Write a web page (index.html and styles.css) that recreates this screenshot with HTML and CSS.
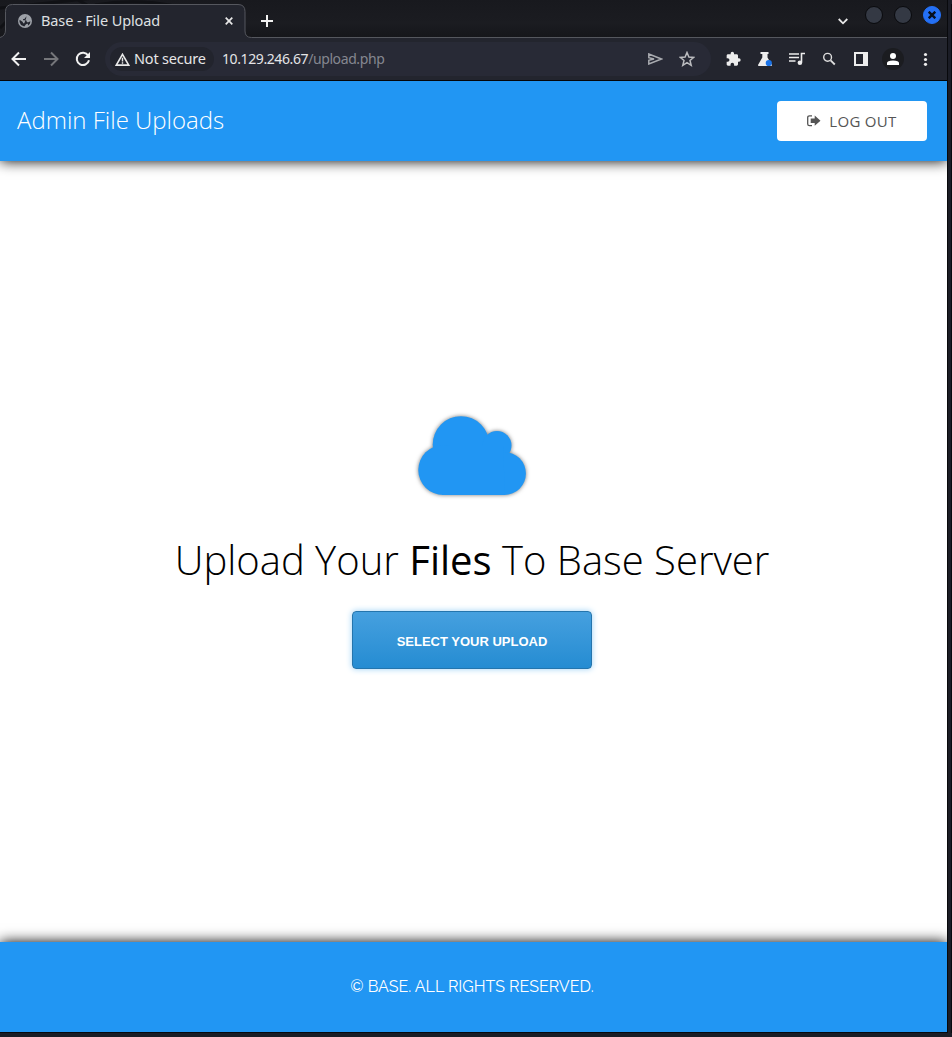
FILE: index.html
```html
<!DOCTYPE html>
<html lang="en">
<head>
<meta charset="utf-8">
<title>Base - File Upload</title>
<link rel="stylesheet" href="styles.css">
</head>
<body>
<div class="window">
  <div class="tabstrip">
    <svg class="tab-shape" width="947" height="38" viewBox="0 0 947 38"><g fill="none" stroke="#101115" stroke-width="3"><path d="M0 8L48 3L94 -2M78 0L94 9M0 28L8 20M95 5Q135 -2 175 6"/></g><path d="M0 38V37.5Q5.500 36 5.500 30V11.500Q5.500 4.500 12.500 4.500H238Q245 4.500 245 11.500V31Q245 37.500 251.500 37.500H947V38Z" fill="#23252e"/><path d="M0 37.500Q5.500 36 5.500 30V11.500Q5.500 4.500 12.500 4.500H238Q245 4.500 245 11.500V31Q245 37.500 251.500 37.500H947" fill="none" stroke="#55575e"/></svg>
    <div class="tab">
      <svg class="globe" width="14" height="14" viewBox="0 0 14 14"><circle cx="7" cy="7" r="7" fill="#9da1a8"/><path d="M9 1.800L8.800 3.300L7.200 3.500L6.800 4.800L5 5.300V6.300H8.200L9 8.300H10.500L12.400 7.200L12 9.500L10.800 11L9.300 12.200L6.300 12.600L7.800 10.500L6.300 9.300L5 9.300L4.800 8L1.600 5.800L1.500 8L3 11L6.300 12.600L9.300 12.200L10.300 11.200L9.500 9.600L7.800 10.500L6.300 9.300Z" fill="#23252e"/></svg>
      <span class="tab-title">Base - File Upload</span>
      <svg class="close" width="8" height="8" viewBox="0 0 8 8"><path d="M.7.7L7.300 7.300M7.300.7L.7 7.300" stroke="#e8e8e8" stroke-width="1.700"/></svg>
    </div>
    <svg class="plus" width="12" height="12" viewBox="0 0 12 12"><path d="M6 0V12M0 6H12" stroke="#f1f1f1" stroke-width="2"/></svg>
    <div class="controls">
      <svg class="chevron" width="10" height="7" viewBox="0 0 10 7"><path d="M.7 1L5 5.300L9.300 1" fill="none" stroke="#e8e8e8" stroke-width="1.800"/></svg>
      <i class="dot"></i><i class="dot"></i>
      <i class="dot quit"><svg width="8" height="8" viewBox="0 0 8 8"><path d="M.7.7L7.300 7.300M7.300.7L.7 7.300" stroke="#07101f" stroke-width="2.400"/></svg></i>
    </div>
  </div>
  <div class="toolbar">
    <div class="nav">
      <svg width="16" height="16" viewBox="0 0 16 16"><path d="M15 8H2M8 1.500L1.500 8L8 14.500" fill="none" stroke="#f1f1f1" stroke-width="2"/></svg>
      <svg width="16" height="16" viewBox="0 0 16 16"><path d="M1 8H14M8 1.500L14.500 8L8 14.500" fill="none" stroke="#75767a" stroke-width="2"/></svg>
      <svg width="16" height="16" viewBox="0 0 16 16"><path d="M13.200 4.500A6.200 6.200 0 1 0 14 9.300" fill="none" stroke="#f1f1f1" stroke-width="2"/><path d="M15 1V7H9Z" fill="#f1f1f1"/></svg>
    </div>
    <div class="omnibox">
      <div class="security">
        <svg width="15" height="13" viewBox="0 0 15 13"><path d="M7.500 1.300L13.700 12.100H1.300Z" fill="none" stroke="#e9e9e9" stroke-width="1.600"/><path d="M7.500 4.800V8.600M7.500 9.300V10.800" stroke="#e9e9e9" stroke-width="1.400"/></svg>
        <span class="secure-text">Not secure</span>
      </div>
      <span class="url"><span class="host">10.129.246.67</span><span class="path">/upload.php</span></span>
      <svg class="send" width="15" height="12" viewBox="0 0 15 12"><path d="M.8 1L13.500 6L.8 11V7.300L6 6L.8 4.700Z" fill="none" stroke="#a9abb0" stroke-width="1.500"/></svg>
      <svg class="star" width="16" height="16" viewBox="0 0 16 16"><path d="M8 1.500L9.900 6L14.700 6.400L11 9.500L12.200 14.300L8 11.700L3.800 14.300L5 9.500L1.300 6.400L6.100 6Z" fill="none" stroke="#bbbcbf" stroke-width="1.500"/></svg>
    </div>
    <div class="actions">
      <svg width="16" height="16" viewBox="0 0 24 24"><path d="M21 11h-1.500V7c0-1.100-.9-2-2-2h-4V3.500a2.500 2.500 0 0 0-5 0V5h-4c-1.100 0-2 .9-2 2v3.800H4a2.700 2.700 0 0 1 0 5.400H2.500V20c0 1.100.9 2 2 2h3.800v-1.500a2.700 2.700 0 0 1 5.400 0V22h3.800c1.100 0 2-.9 2-2v-4H21a2.500 2.500 0 0 0 0-5z" fill="#ededed"/></svg>
      <svg width="16" height="16" viewBox="0 0 16 16"><path d="M3.500 1H11.500V3H10.500V6.500L15 14Q15 15 14 15H2Q.7 15 1 14L5.300 6.500V3H3.500Z" fill="#ededed"/><circle cx="11.800" cy="12" r="3.100" fill="#1a73e8"/></svg>
      <svg width="16" height="16" viewBox="0 0 16 16"><path d="M0 3H10M0 6.500H10M0 10H6.500" stroke="#ededed" stroke-width="1.500"/><path d="M12.500 11.500V2.500H16" fill="none" stroke="#ededed" stroke-width="1.600"/><circle cx="10.900" cy="11.700" r="2.300" fill="#ededed"/></svg>
      <svg width="16" height="16" viewBox="0 0 16 16"><circle cx="6.600" cy="6.300" r="3.900" fill="none" stroke="#dedede" stroke-width="1.400"/><path d="M9.600 9.300L13.800 13.500" stroke="#dedede" stroke-width="1.800"/></svg>
      <svg width="16" height="16" viewBox="0 0 16 16"><path fill-rule="evenodd" d="M1 1H15V15H1ZM3 3V13H10V3Z" fill="#ededed"/></svg>
      <span class="avatar"><svg width="12" height="12" viewBox="0 0 12 12"><circle cx="6" cy="3" r="3" fill="#fff"/><path d="M0 12V10Q0 7.500 6 7.500T12 10V12Z" fill="#fff"/></svg></span>
      <svg width="16" height="16" viewBox="0 0 16 16"><g fill="#ededed"><circle cx="8.500" cy="3.500" r="1.600"/><circle cx="8.500" cy="8.500" r="1.600"/><circle cx="8.500" cy="13.300" r="1.600"/></g></svg>
    </div>
  </div>
  <div class="page">
    <header class="header">
      <h1 class="brand">Admin File Uploads</h1>
      <a class="logout"><svg width="14" height="12" viewBox="0 0 14 12"><path d="M5 .8H2.500Q.7.8.7 2.600V9Q.7 10.700 2.500 10.700H5" fill="none" stroke="#555" stroke-width="1.300"/><path d="M3.700 3.500H7.700V.6L13.500 5.700L7.700 10.800V8H3.700Z" fill="#555"/></svg><span class="logout-text">LOG OUT</span></a>
    </header>
    <main class="main">
      <svg class="cloud" width="108" height="79" viewBox="0 0 108 79"><g fill="#2196f3"><circle cx="43" cy="28.500" r="28.300"/><circle cx="79" cy="29.500" r="14.500"/><circle cx="25.300" cy="54" r="25"/><circle cx="86.400" cy="57.500" r="21.500"/><path d="M24 79V30H85L87 79Z"/></g></svg>
      <h2 class="headline">Upload Your <b>Files</b> To Base Server</h2>
      <button class="upload"><span class="upload-text">SELECT YOUR UPLOAD</span></button>
    </main>
    <footer class="footer"><span class="copyright">© BASE. ALL RIGHTS RESERVED.</span></footer>
  </div>
</div>
</body>
</html>
```
FILE: styles.css
```css
* { box-sizing: border-box; }
body { margin: 0; background: #1b1d26; font-family: "Open Sans", sans-serif; }
svg { display: block; flex: none; }
span { white-space: nowrap; }
.window { width: 948px; height: 1033px; border-right: 1px solid #08090c; border-bottom: 1px solid #08090c; display: flex; flex-direction: column; box-shadow: 3px 3px 0 #1b1d26, 4px 4px 0 #090a0e; }
.tabstrip { position: relative; height: 38px; flex: none; display: flex; background: linear-gradient(#18191e, #1b1c21 60%, #15161a); }
.tab-shape { position: absolute; left: 0; top: 0; }
.tab { position: relative; width: 240px; margin-left: 5px; padding: 4px 12px 0 13px; display: flex; align-items: center; height: 38px; }
.tab-title { margin-left: 9px; padding-bottom: 2px; flex: 1; font: 14.5px/20px "Noto Sans", sans-serif; color: #dfe0e2; letter-spacing: -.1px; }
.plus { margin: 15px 0 0 16px; position: relative; }
.controls { position: relative; margin-left: auto; padding: 6px 6px 0 0; display: flex; align-items: flex-start; }
.chevron { margin: 12px 17px 0 0; }
.dot { width: 18px; height: 18px; margin-left: 11px; border-radius: 50%; background: #343944; border: 1px solid #090a0d; display: flex; align-items: center; justify-content: center; }
.chevron + .dot { margin-left: 0; }
.quit { background: #2470f5; border-color: #2470f5; }
.toolbar { height: 43px; flex: none; display: flex; align-items: center; background: #23252e; border-bottom: 1px solid #050608; }
.nav { display: flex; gap: 16px; padding-left: 11px; width: 105px; }
.omnibox { width: 606px; height: 34px; border-radius: 17px; background: #282a36; display: flex; align-items: center; }
.security { width: 104px; height: 24px; border-radius: 12px; margin-left: 5px; padding-left: 5px; background: #22242d; display: flex; align-items: center; gap: 4px; }
.secure-text { padding-bottom: 2px; font: 14.5px/22px "Noto Sans", sans-serif; letter-spacing: -.2px; color: #e6e6e7; }
.url { margin-left: 8px; font: 14px/22px "Noto Sans", sans-serif; letter-spacing: -.4px; color: #858790; }
.host { color: #e4e4e6; }
.send { margin-left: auto; }
.star { margin: 0 16px; }
.actions { display: flex; align-items: center; gap: 16px; margin-left: 14px; }
.avatar { width: 22px; height: 22px; margin: 0 -3px; border-radius: 50%; background: #1b1c20; display: flex; align-items: center; justify-content: center; }
.page { flex: 1; display: flex; flex-direction: column; overflow: hidden; background: #fff; }
.header { height: 80px; flex: none; display: flex; align-items: center; justify-content: space-between; padding: 0 20px 0 17px; background: #2196f3; box-shadow: 0 0 13px #000; }
.brand { margin: 0; padding-bottom: 2px; font-size: 24px; font-weight: 300; line-height: 34px; color: #fff; white-space: nowrap; }
.logout { width: 150px; height: 40px; border-radius: 4px; background: #fff; display: flex; align-items: center; justify-content: center; gap: 8px; color: #555; }
.logout-text { font-size: 15px; letter-spacing: .3px; }
.main { flex: 1; display: flex; flex-direction: column; align-items: center; padding: 255px 3px 0 0; }
.cloud { filter: drop-shadow(0 0 2px #777); overflow: visible; }
.headline { margin: 36px 0 0; font-size: 40px; line-height: 57px; font-weight: 300; color: #000; white-space: nowrap; }
.headline b { font-weight: 500; }
.upload { width: 240px; height: 58px; margin-top: 23px; padding: 2px 0 0; border: 1px solid #2475ad; border-radius: 4px; background: linear-gradient(#46a0df, #258cd2); box-shadow: 0 0 6px #9bd0f5; }
.upload-text { font: bold 13px "Liberation Sans", sans-serif; color: #fff; }
.footer { height: 90px; flex: none; display: flex; align-items: center; justify-content: center; padding-right: 3px; background: #2196f3; box-shadow: 0 0 13px #000; }
.copyright { font: 400 16px/24px Raleway, Lato, "Open Sans", sans-serif; color: #fff; }
```
